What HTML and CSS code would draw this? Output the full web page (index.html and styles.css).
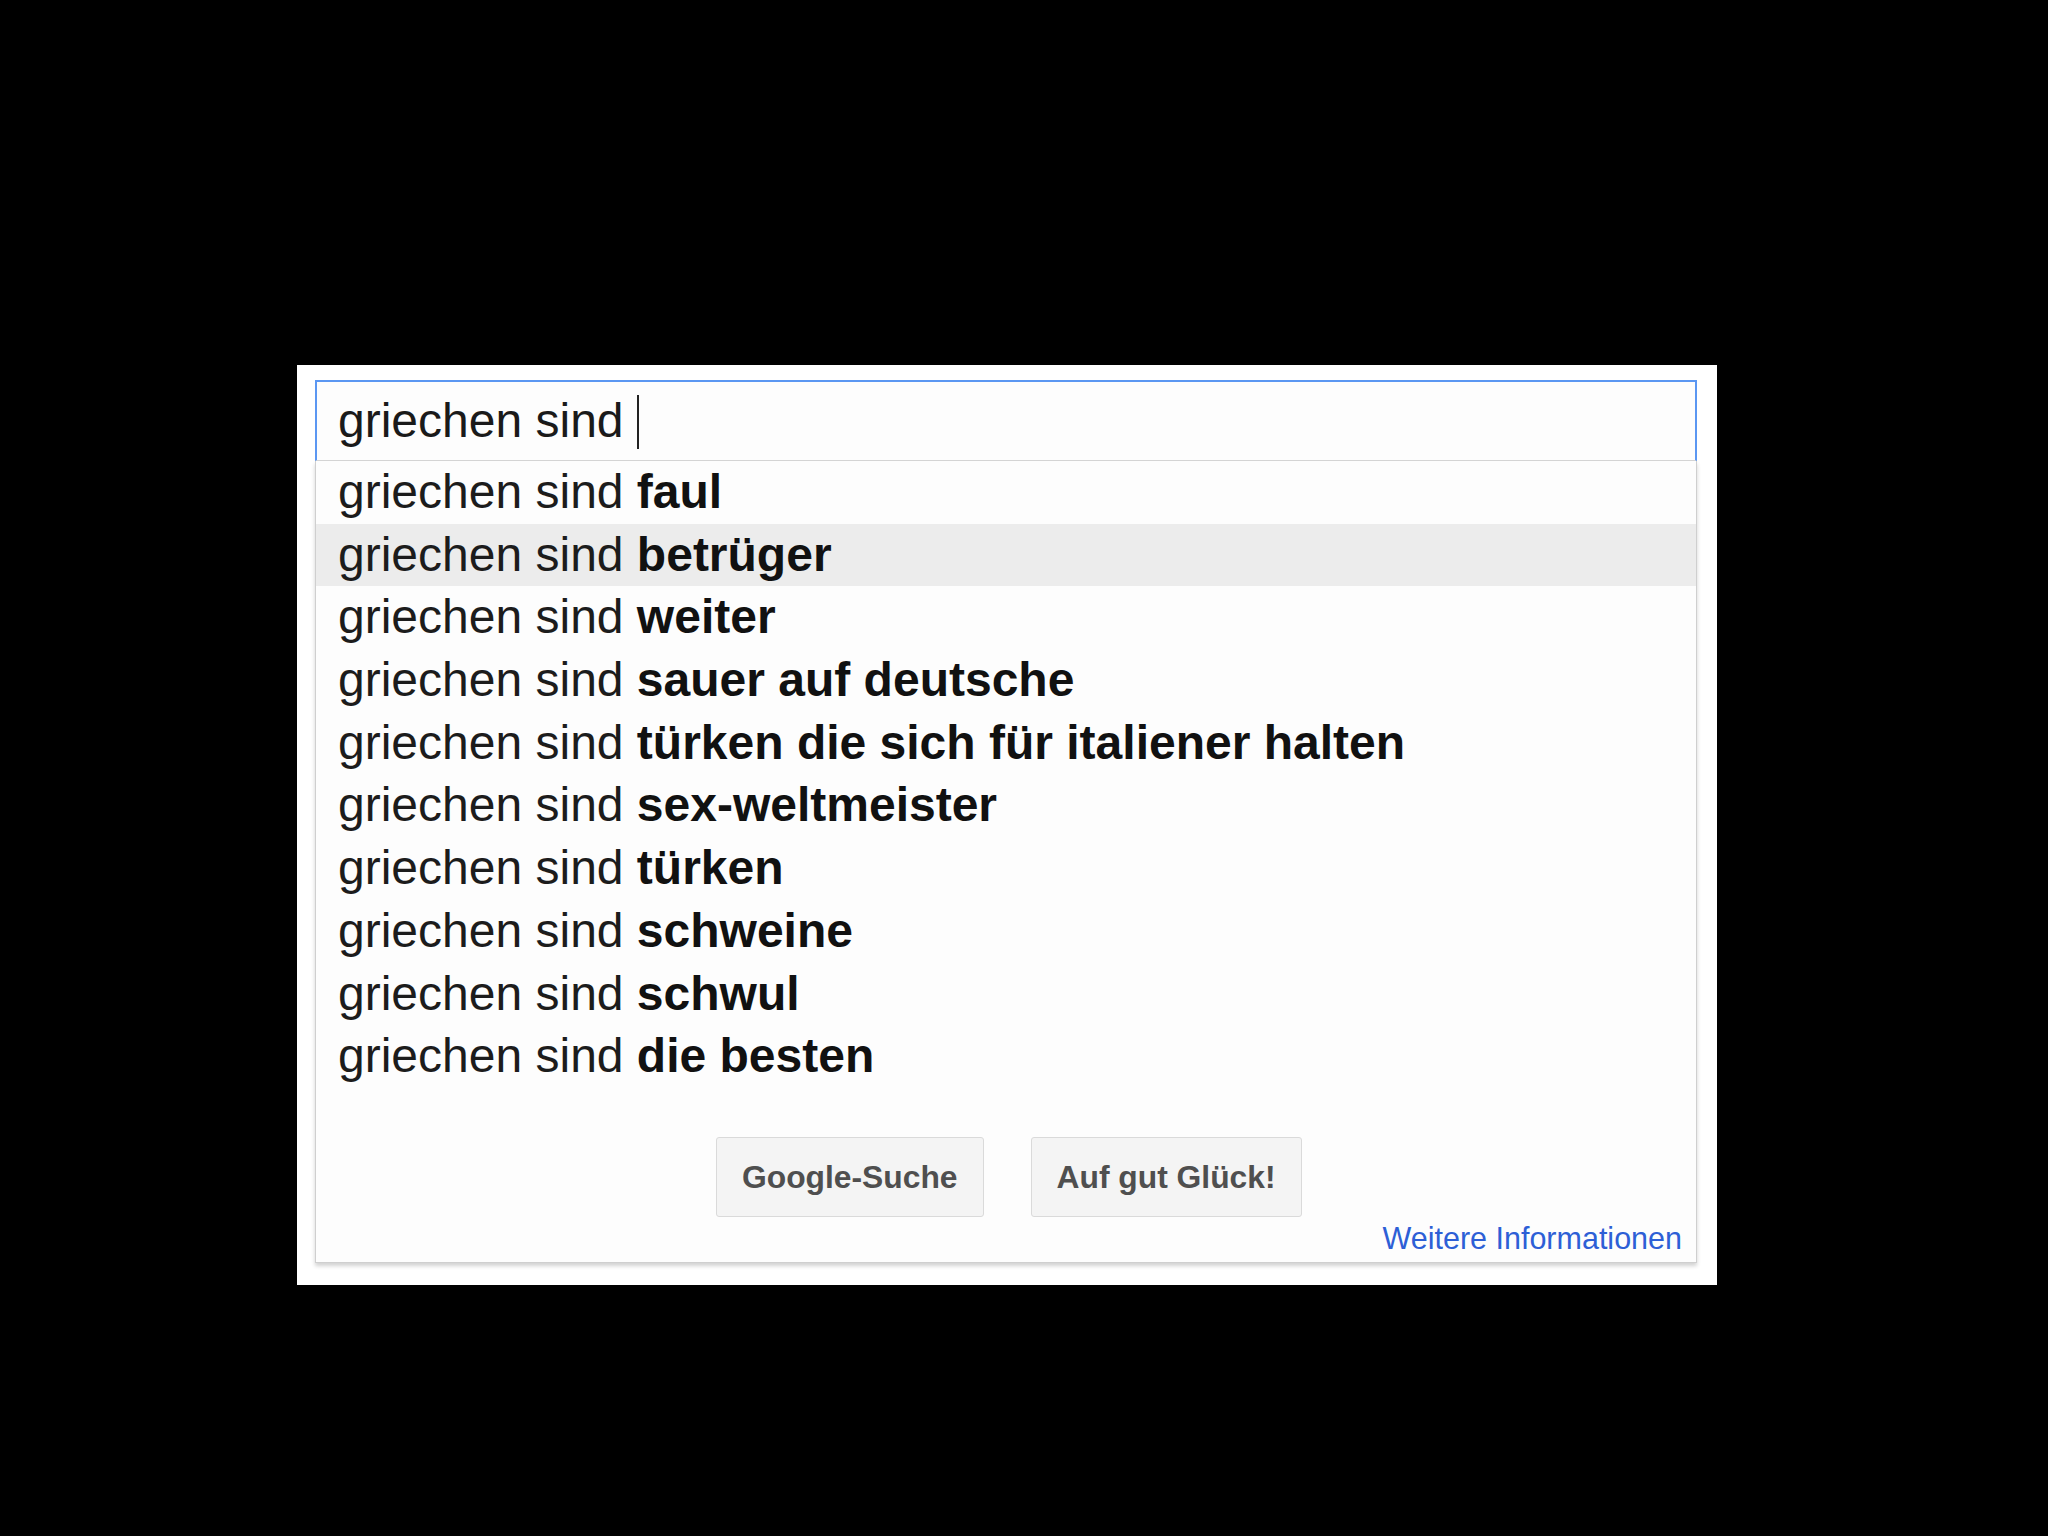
FILE: index.html
```html
<!DOCTYPE html>
<html lang="de">
<head>
<meta charset="utf-8">
<title>griechen sind</title>
<link rel="stylesheet" href="styles.css">
</head>
<body>
<div class="frame">
  <div class="search-input">griechen sind <span class="caret"></span></div>
  <div class="dropdown">
    <ul class="suggestions">
      <li class="row">griechen sind <b>faul</b></li>
      <li class="row active">griechen sind <b>betrüger</b></li>
      <li class="row">griechen sind <b>weiter</b></li>
      <li class="row">griechen sind <b>sauer auf deutsche</b></li>
      <li class="row">griechen sind <b>türken die sich für italiener halten</b></li>
      <li class="row">griechen sind <b>sex-weltmeister</b></li>
      <li class="row">griechen sind <b>türken</b></li>
      <li class="row">griechen sind <b>schweine</b></li>
      <li class="row">griechen sind <b>schwul</b></li>
      <li class="row">griechen sind <b>die besten</b></li>
    </ul>
    <div class="buttons">
      <span class="btn">Google-Suche</span>
      <span class="btn">Auf gut Glück!</span>
    </div>
    <div class="more"><a class="more-link">Weitere Informationen</a></div>
  </div>
</div>
</body>
</html>
```

FILE: styles.css
```css
html, body {
  margin: 0;
  padding: 0;
  background: #000;
}
body {
  width: 2048px;
  height: 1536px;
  padding-top: 365px;
  padding-left: 297px;
  box-sizing: border-box;
  font-family: "Liberation Sans", Arial, sans-serif;
}
.frame {
  width: 1420px;
  box-sizing: border-box;
  background: #fff;
  padding: 15px 20px 22px 18px;
}
.search-input {
  height: 81px;
  box-sizing: border-box;
  border: 2px solid #5b97f2;
  border-bottom: 1px solid #d6d6d6;
  background: #fdfdfd;
  padding: 2px 0 2px 21px;
  font-size: 48px;
  line-height: 74px;
  color: #1a1a1a;
  white-space: pre;
}
.caret {
  display: inline-block;
  width: 2px;
  height: 54px;
  background: #222;
  vertical-align: -12px;
}
.dropdown {
  border: 1px solid #cfcfcf;
  border-top: none;
  background: #fdfdfd;
  box-shadow: 0 3px 4px rgba(0, 0, 0, 0.18);
  padding-bottom: 8px;
}
.suggestions {
  list-style: none;
  margin: 0;
  padding: 0;
}
.row {
  height: 62.7px;
  line-height: 62.7px;
  padding-left: 22px;
  font-size: 48px;
  color: #1c1c1c;
  white-space: nowrap;
}
.row b {
  font-weight: bold;
  color: #111;
}
.row.active {
  background: #ececec;
}
.buttons {
  display: flex;
  gap: 47px;
  margin-top: 49px;
  padding-left: 400px;
}
.btn {
  height: 80px;
  box-sizing: border-box;
  padding: 0 25px;
  border: 1px solid #dadada;
  border-radius: 3px;
  background: #f4f4f4;
  color: #4f4f4f;
  font-size: 31.8px;
  font-weight: bold;
  line-height: 78px;
  white-space: nowrap;
}
.more {
  margin-top: 6px;
  text-align: right;
  padding-right: 14px;
  font-size: 30.5px;
  line-height: 31px;
}
.more-link {
  color: #2d5fd6;
  text-decoration: none;
}
```
